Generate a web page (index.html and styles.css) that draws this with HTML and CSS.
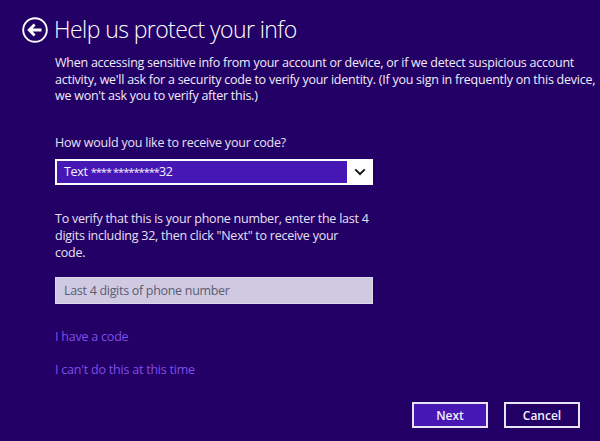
FILE: index.html
```html
<!DOCTYPE html>
<html lang="en">
<head>
<meta charset="utf-8">
<title>Help us protect your info</title>
<link rel="stylesheet" href="styles.css">
</head>
<body>
<main class="page">
  <header class="head">
    <svg class="back" width="26" height="26" viewBox="0 0 26 26" aria-hidden="true">
      <circle cx="13" cy="13" r="11.8" fill="none" stroke="#fff" stroke-width="1.9"/>
      <path d="M7.5 13 H19.5 M12.6 7.6 L7.2 13 L12.6 18.4" fill="none" stroke="#fff" stroke-width="2.8"/>
    </svg>
    <h1 class="title">Help us protect your info</h1>
  </header>
  <div class="content">
    <p class="intro">When accessing sensitive info from your account or device, or if we detect suspicious account<br>activity, we'll ask for a security code to verify your identity. (If you sign in frequently on this device,<br>we won't ask you to verify after this.)</p>
    <p class="label">How would you like to receive your code?</p>
    <div class="select">
      <span class="select-value">Text&nbsp;<span class="mask">**** *********</span>32</span>
      <span class="select-arrow">
        <svg width="12" height="8" viewBox="0 0 12 8" aria-hidden="true"><path d="M1.2 1.4 L6 6 L10.8 1.4" fill="none" stroke="#1c1c1c" stroke-width="2"/></svg>
      </span>
    </div>
    <p class="verify">To verify that this is your phone number, enter the last 4<br>digits including 32, then click "Next" to receive your<br>code.</p>
    <div class="input">Last 4 digits of phone number</div>
    <a class="link link-first" href="#">I have a code</a>
    <a class="link link-second" href="#">I can't do this at this time</a>
  </div>
  <footer class="actions">
    <button class="btn btn-primary" type="button">Next</button>
    <button class="btn" type="button">Cancel</button>
  </footer>
</main>
</body>
</html>
```
FILE: styles.css
```css
* { box-sizing: border-box; }
html, body { margin: 0; padding: 0; }
body {
  width: 600px;
  height: 441px;
  overflow: hidden;
  background: #230066;
  color: #fff;
  font-family: "Open Sans", "Noto Sans", sans-serif;
  font-size: 12.5px;
}
.page { display: flex; flex-direction: column; height: 441px; padding: 16px 20px 13px 22px; }
.head { display: flex; align-items: center; gap: 6px; height: 27px; }
.back { flex: none; }
.title { margin: 0; font-size: 23px; font-weight: 300; line-height: 27px; letter-spacing: -0.58px; color: #fff; }
.content { display: flex; flex-direction: column; align-items: flex-start; padding-left: 33px; flex: 1; }
.intro { margin: 12px 0 0; line-height: 16.5px; white-space: nowrap; letter-spacing: -0.25px; color: #f0ecf8; }
.label { margin: 29px 0 0; line-height: 17px; letter-spacing: -0.22px; color: #e6e0f2; }
.select { display: flex; width: 318px; height: 26px; margin-top: 8px; border: 1px solid #fff; border-right: 0; background: #fff; }
.select-value { flex: 1; display: flex; align-items: center; padding-left: 7px; background: #4617b4; color: #f4f0fb; border: 1px solid #fff; border-width: 1px 0 1px 1px; letter-spacing: -0.3px; white-space: pre; }
.mask { font-size: 11px; letter-spacing: -0.95px; }
.select-arrow { flex: none; width: 26px; display: flex; align-items: center; justify-content: center; background: #fff; }
.verify { margin: 25px 0 0; line-height: 17px; letter-spacing: -0.25px; color: #e6e0f2; }
.input { width: 318px; height: 27px; margin-top: 16px; display: flex; align-items: center; padding-left: 8px; background: #cfcae2; color: #5d5a70; border: 1px solid #dcd8ec; letter-spacing: -0.3px; }
.link { color: #7f4fe8; text-decoration: none; line-height: 17px; letter-spacing: -0.22px; }
.link-first { margin-top: 24px; }
.link-second { margin-top: 16px; }
.actions { display: flex; justify-content: flex-end; gap: 16px; }
.btn { width: 76px; height: 26px; padding: 0; font: 600 12px "Open Sans", "Noto Sans", sans-serif; color: #f4f0fb; background: #230066; border: 2px solid #e8e4f2; border-radius: 0; }
.btn-primary { background: #4617b4; }
```
